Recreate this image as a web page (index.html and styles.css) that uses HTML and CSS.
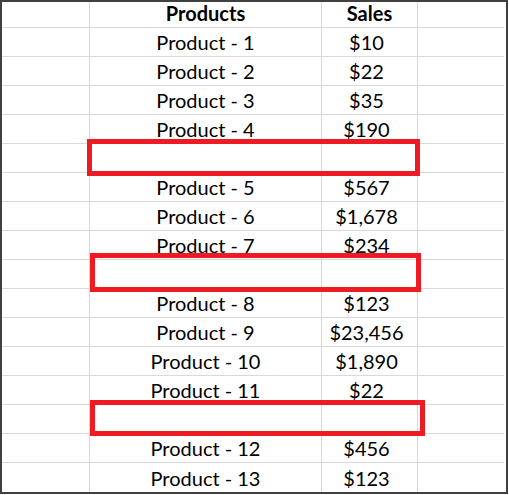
FILE: index.html
```html
<!DOCTYPE html>
<html>
<head>
<meta charset="utf-8">
<link rel="stylesheet" href="styles.css">
</head>
<body>
<div class="sheet">
  <div class="grid">
    <div class="cell"></div><div class="cell name head">Products</div><div class="cell val head">Sales</div><div class="cell"></div>
    <div class="cell"></div><div class="cell name">Product - 1</div><div class="cell val">$10</div><div class="cell"></div>
    <div class="cell"></div><div class="cell name">Product - 2</div><div class="cell val">$22</div><div class="cell"></div>
    <div class="cell"></div><div class="cell name">Product - 3</div><div class="cell val">$35</div><div class="cell"></div>
    <div class="cell"></div><div class="cell name">Product - 4</div><div class="cell val">$190</div><div class="cell"></div>
    <div class="cell"></div><div class="cell name"></div><div class="cell val"></div><div class="cell"></div>
    <div class="cell"></div><div class="cell name">Product - 5</div><div class="cell val">$567</div><div class="cell"></div>
    <div class="cell"></div><div class="cell name">Product - 6</div><div class="cell val">$1,678</div><div class="cell"></div>
    <div class="cell"></div><div class="cell name">Product - 7</div><div class="cell val">$234</div><div class="cell"></div>
    <div class="cell"></div><div class="cell name"></div><div class="cell val"></div><div class="cell"></div>
    <div class="cell"></div><div class="cell name">Product - 8</div><div class="cell val">$123</div><div class="cell"></div>
    <div class="cell"></div><div class="cell name">Product - 9</div><div class="cell val">$23,456</div><div class="cell"></div>
    <div class="cell"></div><div class="cell name">Product - 10</div><div class="cell val">$1,890</div><div class="cell"></div>
    <div class="cell"></div><div class="cell name">Product - 11</div><div class="cell val">$22</div><div class="cell"></div>
    <div class="cell"></div><div class="cell name"></div><div class="cell val"></div><div class="cell"></div>
    <div class="cell"></div><div class="cell name">Product - 12</div><div class="cell val">$456</div><div class="cell"></div>
    <div class="cell"></div><div class="cell name">Product - 13</div><div class="cell val">$123</div><div class="cell"></div>
  </div>
  <div class="mark mark-1"></div>
  <div class="mark mark-2"></div>
  <div class="mark mark-3"></div>
</div>
</body>
</html>
```

FILE: styles.css
```css
html, body {
  margin: 0;
  padding: 0;
  background: #ffffff;
}
.sheet {
  position: relative;
  width: 508px;
  box-sizing: border-box;
  border: 2px solid #404040;
  font-family: Lato, "Liberation Sans", sans-serif;
  font-size: 20px;
  color: #000;
}
.grid {
  display: grid;
  grid-template-columns: 88px 232px 96px 86px;
  grid-template-rows: 26px repeat(16, 29px);
}
.cell {
  box-sizing: border-box;
  border-right: 1px solid #d9d9d9;
  border-bottom: 1px solid #d9d9d9;
  display: flex;
  align-items: flex-end;
  justify-content: center;
  line-height: 24px;
  padding-bottom: 2px;
  white-space: nowrap;
}
.cell:nth-child(4n) {
  border-right: none;
}
.cell:nth-last-child(-n+4) {
  border-bottom: none;
}
.val {
  padding-right: 6px;
}
.head {
  font-weight: bold;
  padding-bottom: 2px;
}
.val.head {
  padding-right: 0;
}
.mark {
  position: absolute;
  box-sizing: border-box;
  border: 5px solid #ed1c24;
}
.mark-1 { left: 85px; top: 137px; width: 333px; height: 37px; }
.mark-2 { left: 88px; top: 251px; width: 331px; height: 39px; }
.mark-3 { left: 88px; top: 398px; width: 335px; height: 36px; }
```
